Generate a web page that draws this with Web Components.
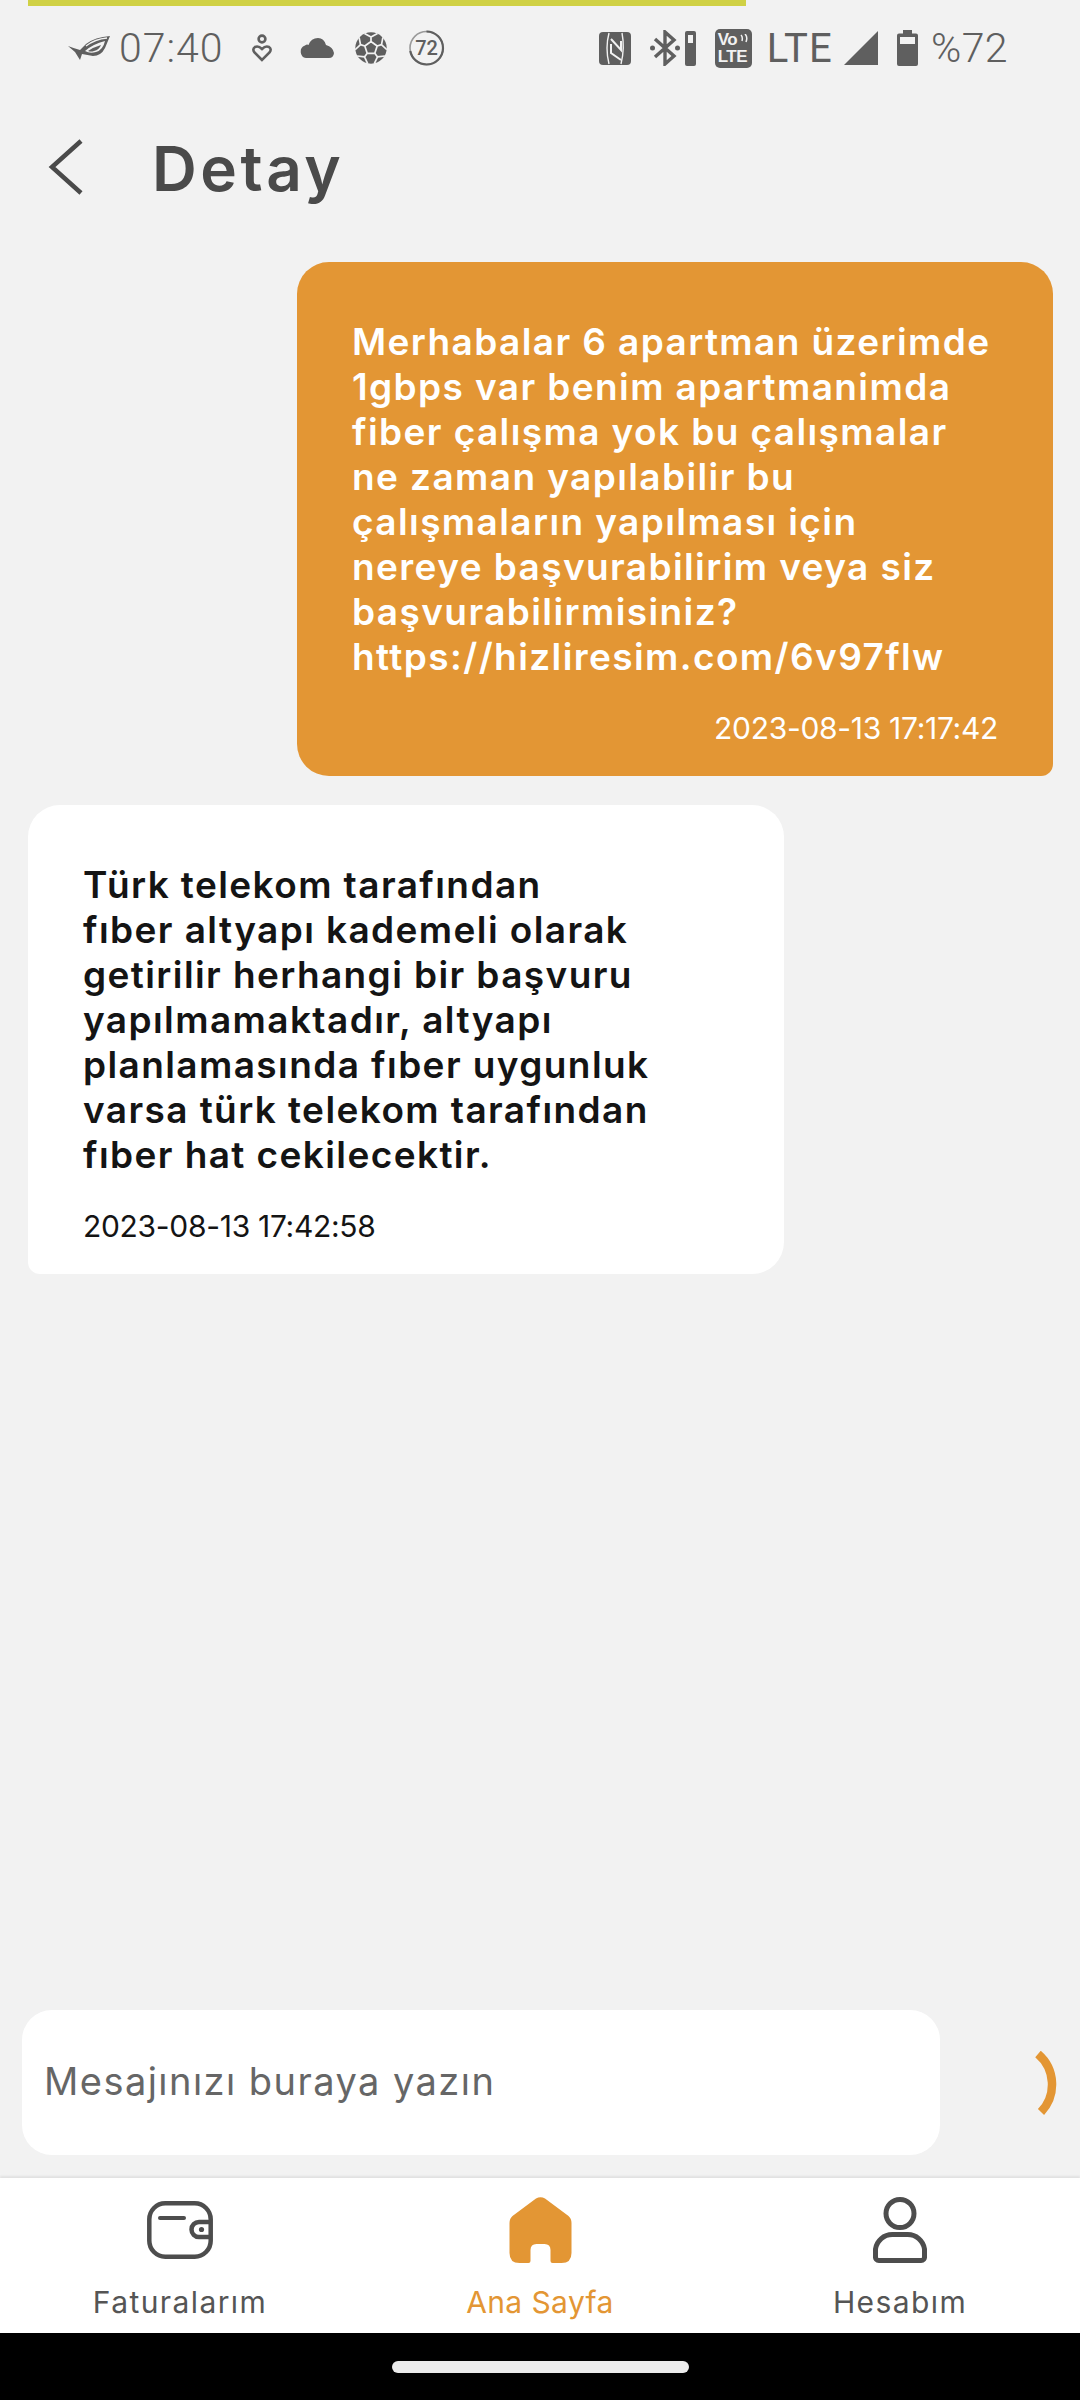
<!DOCTYPE html>
<html lang="tr">
<head>
<meta charset="utf-8">
<title>Detay</title>
<style>
  html, body { margin: 0; padding: 0; background: #f2f2f2; }
  body { font-family: Inter, "Noto Sans", sans-serif; }
</style>
</head>
<body>
<detail-screen>
  <status-bar slot="status"></status-bar>
  <top-bar slot="top" title="Detay"></top-bar>

  <chat-bubble side="me" time="2023-08-13 17:17:42">Merhabalar 6 apartman üzerimde<br>1gbps var benim apartmanimda<br>fiber çalışma yok bu çalışmalar<br>ne zaman yapılabilir bu<br>çalışmaların yapılması için<br>nereye başvurabilirim veya siz<br>başvurabilirmisiniz?<br>https://hizliresim.com/6v97flw</chat-bubble>
  <chat-bubble side="them" time="2023-08-13 17:42:58">Türk telekom tarafından<br>fıber altyapı kademeli olarak<br>getirilir herhangi bir başvuru<br>yapılmamaktadır, altyapı<br>planlamasında fıber uygunluk<br>varsa türk telekom tarafından<br>fıber hat cekilecektir.</chat-bubble>

  <message-input slot="input" placeholder="Mesajınızı buraya yazın"></message-input>

  <bottom-nav slot="nav">
    <nav-item label="Faturalarım">
      <svg width="66" height="58" viewBox="0 0 66 58" fill="none" stroke="#4d4d4d" stroke-width="4.5">
        <rect x="2.3" y="2.3" width="61.4" height="53.4" rx="16"/>
        <path d="M13 17H37" stroke-linecap="round" stroke-width="4"/>
        <path d="M63.5 21H52a7.5 7.5 0 0 0 0 15H63.5"/>
        <circle cx="54.500" cy="28.500" r="2.600" fill="#4d4d4d" stroke="none"/>
      </svg>
    </nav-item>
    <nav-item label="Ana Sayfa" active>
      <svg width="63" height="66" viewBox="0 0 62 66" fill="#e39634">
        <path d="M26.500 1.500L3 19Q0 21.500 0 26V56Q0 66 10 66H19Q21 66 21 64V53Q21 47 27 47H35Q41 47 41 53V64Q41 66 43 66H52Q62 66 62 56V26Q62 21.500 59 19L35.500 1.500Q31 -1 26.500 1.500Z"/>
      </svg>
    </nav-item>
    <nav-item label="Hesabım">
      <svg width="54" height="66" viewBox="0 0 54 66" fill="none" stroke="#4d4d4d" stroke-width="5">
        <circle cx="27" cy="16.500" r="14"/>
        <path d="M2.500 52A17 17 0 0 1 19.500 37.500H34.500A17 17 0 0 1 51.500 52V59.500A3.500 3.500 0 0 1 48 63.500H6A3.500 3.500 0 0 1 2.500 59.500Z" stroke-linejoin="round"/>
      </svg>
    </nav-item>
  </bottom-nav>

  <gesture-bar slot="gesture"></gesture-bar>
</detail-screen>

<script>
// Page frame: header stuff on top, messages fill the middle, input and nav at the bottom
class DetailScreen extends HTMLElement {
  constructor() {
    super();
    this.attachShadow({ mode: "open" });
    this.shadowRoot.innerHTML = `
      <style>
        :host {
          display: flex;
          flex-direction: column;
          width: 1080px;
          height: 2400px;
          overflow: hidden;
          background: #f2f2f2;
        }
        .progress {
          height: 6px;
          width: 718px;
          margin-left: 28px;
          background: #d0d145;
          flex: none;
        }
        .messages {
          flex: 1;
          display: flex;
          flex-direction: column;
          gap: 29px;
          padding: 18px 27px 0 28px;
          min-height: 0;
        }
      </style>
      <div class="progress"></div>
      <slot name="status"></slot>
      <slot name="top"></slot>
      <div class="messages"><slot></slot></div>
      <slot name="input"></slot>
      <slot name="nav"></slot>
      <slot name="gesture"></slot>
    `;
  }
}
customElements.define("detail-screen", DetailScreen);

// seams of the football icon: centre pentagon, spokes, then a fork out to the rim
function ballSeams() {
  const at = (deg, r) => {
    const a = (deg * Math.PI) / 180;
    return `${(16 + r * Math.cos(a)).toFixed(1)} ${(16 + r * Math.sin(a)).toFixed(1)}`;
  };
  let d = "";
  for (let i = 0; i < 5; i++) {
    const deg = -90 + i * 72;
    d += `M${at(deg, 6.5)}L${at(deg + 72, 6.5)}`;
    d += `M${at(deg, 6.5)}L${at(deg, 11)}`;
    d += `M${at(deg - 24, 16)}L${at(deg, 11)}L${at(deg + 24, 16)}`;
  }
  return d;
}

// Android status bar
class StatusBar extends HTMLElement {
  constructor() {
    super();
    this.attachShadow({ mode: "open" });
    this.shadowRoot.innerHTML = `
      <style>
        :host {
          display: flex;
          align-items: center;
          justify-content: space-between;
          height: 84px;
          padding: 0 72px 0 68px;
          color: #5f5f5f;
          font-family: Roboto, sans-serif;
          font-weight: 300;
          font-size: 41px;
          flex: none;
        }
        .group { display: flex; align-items: center; }
        svg { display: block; flex: none; }
        .time { margin-left: 9px; margin-right: 28px; letter-spacing: 1px; }
        .lte { font-size: 40px; letter-spacing: 1.2px; margin: 0 11px 0 15px; font-weight: 400; }
        .pct { margin-left: 13px; letter-spacing: 0.4px; }
        .volte {
          position: relative;
          width: 37px;
          height: 39px;
          margin-left: 19px;
          border-radius: 5px;
          background: #5f5f5f;
          color: #f2f2f2;
          font: 700 17px/17px "Liberation Sans", sans-serif;
          display: flex;
          flex-direction: column;
          justify-content: center;
          padding-left: 3px;
          box-sizing: border-box;
        }
        .volte span { display: block; height: 17px; letter-spacing: -0.5px; }
        .volte svg { position: absolute; top: 5px; right: 3px; }
      </style>
      <div class="group">
        <svg width="42" height="24" viewBox="0 0 42 24" fill="#5f5f5f">
          <path d="M42 0Q27 1 18 8L12 14Q5 12 0 10L7 16L12 24L14 18L25 20Q33 20 37 12Z"/>
          <path d="M17 15Q25 8 37 5Q35 14 28 16Q22 18 17 15Z" fill="#f2f2f2"/>
          <path d="M20 15Q26 11 33 9Q31 14 26 15Q23 16 20 15Z"/>
          <path d="M18 10Q27 3 39 2" stroke="#f2f2f2" stroke-width="1.300" fill="none"/>
        </svg>
        <span class="time">07:40</span>
        <svg width="20" height="28" viewBox="0 0 20 28" fill="none" stroke="#5f5f5f" stroke-width="2.600" style="margin-right:27px">
          <circle cx="10" cy="5" r="3.400"/>
          <path d="M10 26L2.500 18.500Q0 15 3 13Q6.500 11.500 10 15Q13.500 11.500 17 13Q20 15 17.500 18.500Z"/>
        </svg>
        <svg width="35" height="20" viewBox="0 0 35 20" fill="#5f5f5f" style="margin-right:21px">
          <path d="M7 20A6.500 6.500 0 0 1 6 7.500Q8 6 9.500 7Q12 0 19 0Q25 0 27 7Q34 9 35 15Q34.500 20 30 20Z"/>
        </svg>
        <svg width="32" height="32" viewBox="0 0 32 32" style="margin-right:21px">
          <circle cx="16" cy="16" r="15.700" fill="#5f5f5f"/>
          <path d="${ballSeams()}" stroke="#f2f2f2" stroke-width="1.700" fill="none"/>
        </svg>
        <svg width="37" height="38" viewBox="0 0 37 38" fill="none">
          <circle cx="18.500" cy="19" r="16.500" stroke="#9a9a9a" stroke-width="1.600"/>
          <circle cx="18.500" cy="19" r="16.500" stroke="#5f5f5f" stroke-width="2.200" pathLength="100" stroke-dasharray="72 28" transform="rotate(-90 18.500 19)"/>
          <text x="18.500" y="26" text-anchor="middle" font-family="Roboto, sans-serif" font-weight="500" font-size="20" fill="#5f5f5f">72</text>
        </svg>
      </div>
      <div class="group">
        <svg width="32" height="33" viewBox="0 0 32 33" style="margin-right:19px">
          <rect width="32" height="33" rx="4" fill="#5f5f5f"/>
          <path d="M10 1Q6 16 10 32M23 1Q26 16 22 32" stroke="#f2f2f2" stroke-width="1.400" fill="none"/>
          <path d="M12 7L22 18V9M12 12V21L22 28" stroke="#f2f2f2" stroke-width="2" fill="none"/>
        </svg>
        <svg width="30" height="36" viewBox="0 0 30 36" fill="none" stroke="#5f5f5f" stroke-width="3.400" style="margin-right:5px">
          <path d="M5 9L24 26L15 34V2L24 10L5 27"/>
          <circle cx="2.500" cy="18" r="2.500" fill="#5f5f5f" stroke="none"/>
          <circle cx="27.500" cy="18" r="2.500" fill="#5f5f5f" stroke="none"/>
        </svg>
        <svg width="11" height="35" viewBox="0 0 11 35">
          <rect width="11" height="35" rx="2" fill="#5f5f5f"/>
          <rect x="3" y="4" width="5" height="8" fill="#f2f2f2"/>
        </svg>
        <div class="volte">
          <span>Vo</span><span>LTE</span>
          <svg width="9" height="9" viewBox="0 0 9 9" fill="none" stroke="#f2f2f2" stroke-width="1.500"><path d="M1 1Q3 3 2 7M5 0Q8 3 6 8"/></svg>
        </div>
        <span class="lte">LTE</span>
        <svg width="34" height="34" viewBox="0 0 34 34" fill="#5f5f5f" style="margin-right:19px"><path d="M34 0V34H0Z"/></svg>
        <svg width="21" height="36" viewBox="0 0 21 36">
          <path d="M6 0H15V3.500H19Q21 3.500 21 5.500V34Q21 36 19 36H2Q0 36 0 34V5.500Q0 3.500 2 3.500H6Z" fill="#5f5f5f"/>
          <rect x="3" y="7" width="15" height="7" fill="#f2f2f2"/>
        </svg>
        <span class="pct">%72</span>
      </div>
    `;
  }
}
customElements.define("status-bar", StatusBar);

// Back arrow + page title
class TopBar extends HTMLElement {
  constructor() {
    super();
    this.attachShadow({ mode: "open" });
    this.shadowRoot.innerHTML = `
      <style>
        :host {
          display: flex;
          align-items: center;
          gap: 69px;
          height: 154px;
          padding-left: 48px;
          flex: none;
        }
        svg { display: block; flex: none; }
        h1 {
          margin: 0;
          padding-top: 3px;
          font: 600 62px/1 Inter, sans-serif;
          color: #4a4a4a;
          letter-spacing: 3.5px;
        }
      </style>
      <svg width="35" height="56" viewBox="0 0 35 56" fill="none" stroke="#4a4a4a" stroke-width="4.500">
        <path d="M33 2L4 28L33 54"/>
      </svg>
      <h1></h1>
    `;
    this.shadowRoot.querySelector("h1").textContent = this.getAttribute("title");
  }
}
customElements.define("top-bar", TopBar);

// One message; side="me" is the orange one on the right
class ChatBubble extends HTMLElement {
  constructor() {
    super();
    this.attachShadow({ mode: "open" });
    this.shadowRoot.innerHTML = `
      <style>
        :host {
          display: block;
          box-sizing: border-box;
          width: 756px;
          padding: 57px 55px 27px;
          font-family: Inter, sans-serif;
          flex: none;
        }
        :host([side="me"]) {
          align-self: flex-end;
          background: #e39634;
          color: #fff;
          border-radius: 32px 32px 12px 32px;
        }
        :host([side="them"]) {
          align-self: flex-start;
          background: #fff;
          color: #141414;
          border-radius: 32px 32px 32px 12px;
        }
        .text {
          font-size: 37px;
          font-weight: 600;
          line-height: 45px;
          letter-spacing: 1.4px;
          white-space: nowrap;
        }
        .time {
          margin-top: 29px;
          font-size: 30px;
          line-height: 41px;
          letter-spacing: -0.3px;
        }
        :host([side="me"]) .time { text-align: right; }
      </style>
      <div class="text"><slot></slot></div>
      <div class="time"></div>
    `;
    this.shadowRoot.querySelector(".time").textContent = this.getAttribute("time");
  }
}
customElements.define("chat-bubble", ChatBubble);

// Message box and the send spinner next to it
class MessageInput extends HTMLElement {
  constructor() {
    super();
    this.attachShadow({ mode: "open" });
    this.shadowRoot.innerHTML = `
      <style>
        :host {
          display: flex;
          align-items: center;
          justify-content: space-between;
          padding: 0 23px 23px 22px;
          flex: none;
        }
        .box {
          box-sizing: border-box;
          width: 918px;
          height: 145px;
          padding: 0 0 4px 22px;
          display: flex;
          align-items: center;
          background: #fff;
          border-radius: 30px;
          color: #666;
          font: 400 38px Inter, sans-serif;
          letter-spacing: 1.45px;
        }
        svg { display: block; flex: none; }
      </style>
      <div class="box"></div>
      <svg width="22" height="64" viewBox="0 0 22 64" fill="none" stroke="#e39634" stroke-width="8.500">
        <path d="M3 3A40 40 0 0 1 6 61"/>
      </svg>
    `;
    this.shadowRoot.querySelector(".box").textContent = this.getAttribute("placeholder");
  }
}
customElements.define("message-input", MessageInput);

class BottomNav extends HTMLElement {
  constructor() {
    super();
    this.attachShadow({ mode: "open" });
    this.shadowRoot.innerHTML = `
      <style>
        :host {
          display: grid;
          grid-template-columns: repeat(3, 1fr);
          height: 155px;
          background: #fff;
          box-shadow: 0 -2px 2px rgba(0, 0, 0, 0.07);
          flex: none;
        }
      </style>
      <slot></slot>
    `;
  }
}
customElements.define("bottom-nav", BottomNav);

class NavItem extends HTMLElement {
  constructor() {
    super();
    this.attachShadow({ mode: "open" });
    this.shadowRoot.innerHTML = `
      <style>
        :host {
          display: flex;
          flex-direction: column;
          align-items: center;
          color: #555;
          font: 400 30px/40px Inter, sans-serif;
          letter-spacing: 1.4px;
        }
        :host([active]) { color: #e39634; letter-spacing: 0.4px; }
        .icon {
          height: 66px;
          margin-top: 19px;
          display: flex;
          align-items: center;
          justify-content: center;
        }
        .label { margin-top: 19px; }
      </style>
      <div class="icon"><slot></slot></div>
      <div class="label"></div>
    `;
    this.shadowRoot.querySelector(".label").textContent = this.getAttribute("label");
  }
}
customElements.define("nav-item", NavItem);

class GestureBar extends HTMLElement {
  constructor() {
    super();
    this.attachShadow({ mode: "open" });
    this.shadowRoot.innerHTML = `
      <style>
        :host {
          display: flex;
          align-items: center;
          justify-content: center;
          height: 67px;
          background: #000;
          flex: none;
        }
        .pill { width: 297px; height: 12px; border-radius: 6px; background: #ececec; }
      </style>
      <div class="pill"></div>
    `;
  }
}
customElements.define("gesture-bar", GestureBar);
</script>
</body>
</html>
